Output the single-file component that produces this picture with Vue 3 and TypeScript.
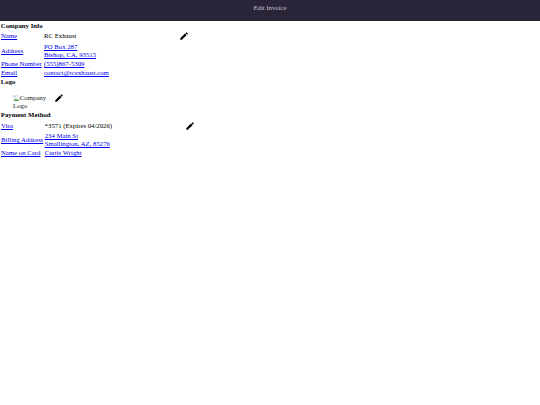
<script setup lang="ts">
interface Row {
  label: string
  lines: string[]
  linked: boolean
  edit?: boolean
}

const company: Row[] = [
  { label: 'Name', lines: ['RC Exhaust'], linked: false, edit: true },
  { label: 'Address', lines: ['PO Box 287', 'Bishop, CA, 93515'], linked: true },
  { label: 'Phone Number', lines: ['(555)867-5309'], linked: true },
  { label: 'Email', lines: ['contact@rcexhaust.com'], linked: true },
]

const payment: Row[] = [
  { label: 'Visa', lines: ['*3571 (Expires 04/2026)'], linked: false, edit: true },
  { label: 'Billing Address', lines: ['234 Main St', 'Smallington, AZ, 85276'], linked: true },
  { label: 'Name on Card', lines: ['Curtis Wright'], linked: true },
]

const sections = [
  { title: 'Company Info', rows: company, cls: 'company' },
  { title: 'Payment Method', rows: payment, cls: 'pay' },
]
</script>

<template>
  <div class="page">
    <header class="bar">Edit Invoice</header>
    <main class="content">
      <template v-for="(s, i) in sections" :key="s.title">
        <template v-if="i === 1">
          <h2 class="heading">Logo</h2>
          <div class="logo-row">
            <span class="broken">
              <svg class="broken-icon" viewBox="0 0 16 16" aria-hidden="true">
                <path d="M1 1h10l4 4v10H1z" fill="#fff" stroke="#b5b5b5" />
                <path d="M2 14l4-6 3 3 2-2 3 5z" fill="#5f9e4a" />
                <rect x="3" y="3" width="5" height="3" fill="#a9c8ea" />
              </svg>Company Logo
            </span>
            <svg class="pencil" viewBox="0 0 24 24" aria-hidden="true">
              <path d="M3 17.25V21h3.75L17.81 9.94l-3.75-3.75L3 17.25zM20.71 7.04a1 1 0 0 0 0-1.41l-2.34-2.34a1 1 0 0 0-1.41 0l-1.83 1.83 3.75 3.75 1.83-1.83z" />
            </svg>
          </div>
        </template>
        <h2 class="heading">{{ s.title }}</h2>
        <table class="info" :class="s.cls">
          <tbody>
            <tr v-for="r in s.rows" :key="r.label">
              <td class="label"><a href="#">{{ r.label }}</a></td>
              <td class="value">
                <template v-if="r.linked">
                  <a href="#" class="block" v-for="l in r.lines" :key="l">{{ l }}</a>
                </template>
                <template v-else>{{ r.lines[0] }}</template>
              </td>
              <td class="action">
                <svg v-if="r.edit" class="pencil" viewBox="0 0 24 24" aria-hidden="true">
                  <path d="M3 17.25V21h3.75L17.81 9.94l-3.75-3.75L3 17.25zM20.71 7.04a1 1 0 0 0 0-1.41l-2.34-2.34a1 1 0 0 0-1.41 0l-1.83 1.83 3.75 3.75 1.83-1.83z" />
                </svg>
              </td>
            </tr>
          </tbody>
        </table>
      </template>
    </main>
  </div>
</template>

<style scoped>
.page {
  zoom: 0.421875;
  font-family: "Liberation Serif", serif;
  font-size: 16px;
  line-height: 19px;
  color: #000;
}
.bar {
  height: 50px;
  box-sizing: border-box;
  padding-top: 9px;
  background: #2a2438;
  color: #c9c7cf;
  text-align: center;
}
.content {
  padding-top: 2px;
}
.heading {
  font-size: 16px;
  line-height: 19px;
  font-weight: bold;
  margin: 0 0 0 2px;
}
.info {
  border-collapse: separate;
  border-spacing: 3px;
  margin-left: -1px;
}
.pay {
  margin-top: 2px;
}
.info td {
  padding: 0 1px;
  vertical-align: middle;
}
.company .action {
  padding-bottom: 2px;
}
a {
  color: #0000ee;
  text-decoration: underline;
}
.block {
  display: block;
}
.company .value {
  width: 315px;
  padding-left: 2px;
}
.pay .value {
  width: 329px;
  padding-left: 0;
}
.action {
  width: 24px;
}
.pencil {
  display: block;
  width: 24px;
  height: 24px;
  fill: #000;
}
.logo-row {
  display: flex;
  align-items: flex-start;
  gap: 7px;
  padding: 17px 0 3px 31px;
}
.broken {
  display: inline-block;
  width: 90px;
  margin-top: 2px;
  color: #222;
}
.broken-icon {
  width: 16px;
  height: 16px;
  vertical-align: -3px;
}
</style>
